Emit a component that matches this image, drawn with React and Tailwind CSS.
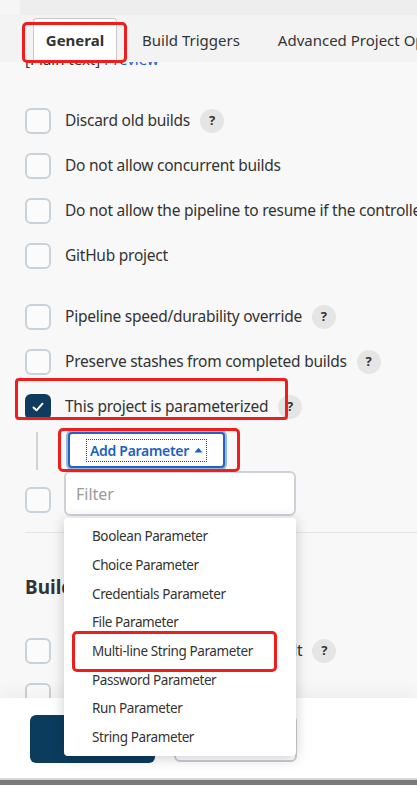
import React from "react";

const Check = ({ checked }) =>
  checked ? (
    <div className="w-[26px] h-[26px] rounded-[6px] bg-[#0f3b5e] flex items-center justify-center shrink-0">
      <svg width="14" height="14" viewBox="0 0 14 14">
        <path d="M2.5 7.5 L5.5 10.3 L11.5 3.7" stroke="white" strokeWidth="2" fill="none" strokeLinecap="round" strokeLinejoin="round" />
      </svg>
    </div>
  ) : (
    <div className="w-[26px] h-[26px] rounded-[6px] border-2 border-[#c9d1d9] bg-[#fbfbfb] shrink-0" />
  );

const Help = () => (
  <span className="ml-[10px] w-[24px] h-[24px] shrink-0 rounded-full bg-[#e5e5e5] text-[#333] text-[13px] font-bold flex items-center justify-center">
    ?
  </span>
);

const Row = ({ label, help, checked, className = "" }) => (
  <div className={"h-[45px] flex items-center pl-[25px] " + className}>
    <Check checked={checked} />
    <span className="ml-[14px] text-[15.5px] text-[#333] whitespace-nowrap tracking-[-0.25px]">{label}</span>
    {help && <Help />}
  </div>
);

const items = [
  "Boolean Parameter",
  "Choice Parameter",
  "Credentials Parameter",
  "File Parameter",
  "Multi-line String Parameter",
  "Password Parameter",
  "Run Parameter",
  "String Parameter",
];

export default function App() {
  return (
    <div className="relative w-[417px] h-[785px] overflow-hidden bg-[#f8f8f8] flex flex-col font-['Noto_Sans',sans-serif]">
      {/* top strip */}
      <div className="h-[15px] flex shrink-0">
        <div className="w-[20px] bg-[#f6f6f6]" />
        <div className="flex-1 bg-[#eeeeee]" />
      </div>
      {/* tab bar */}
      <div className="relative z-10 h-[47px] shrink-0 bg-[#f3f3f3] flex items-end pl-[33px] text-[15px] text-[#333] whitespace-nowrap">
        <div className="shrink-0 w-[84px] h-[44px] bg-white border border-b-0 border-[#c9c9c9] rounded-t-[4px] flex items-center justify-center font-bold">
          General
        </div>
        <div className="shrink-0 h-[44px] flex items-center ml-[25px]">Build Triggers</div>
        <div className="shrink-0 h-[44px] flex items-center ml-[38px]">Advanced Project Options</div>
      </div>

      {/* content */}
      <div className="flex-1 overflow-hidden">
        <div className="h-[7px] overflow-hidden pl-[25px]">
          <div className="-mt-[13px] text-[15px] leading-[20px] whitespace-nowrap">
            <span className="text-[#333]">[Plain text] </span>
            <span className="text-[#1a5fd0]">Preview</span>
          </div>
        </div>
        <div className="mt-[29px]">
          <Row label="Discard old builds" help />
          <Row label="Do not allow concurrent builds" />
          <Row label="Do not allow the pipeline to resume if the controller restarts" />
          <Row label="GitHub project" />
          <Row label="Pipeline speed/durability override" help className="mt-[16px]" />
          <Row label="Preserve stashes from completed builds" help />
          <Row label="This project is parameterized" help checked />
          <div className="mt-[3px] flex items-start">
            <div className="ml-[36px] w-[2px] h-[38px] bg-[#d3d3d3]" />
            <button className="ml-[30px] w-[157px] h-[36px] bg-white border-2 border-[#2262c6] rounded-[4px] shadow-[0_0_0_2px_#9ab8d8] flex items-center justify-center">
              <span className="outline outline-1 outline-dotted outline-[#444] px-[3px] flex items-center gap-[5px] text-[14px] font-semibold text-[#1d5fc2] tracking-[-0.3px]">
                Add Parameter
                <svg width="9" height="6" viewBox="0 0 9 6">
                  <path d="M0.5 5.5 L4.5 0.8 L8.5 5.5 Z" fill="#1d5fc2" />
                </svg>
              </span>
            </button>
          </div>
          <Row label="Throttle builds" help className="mt-[8px] !h-[44px]" />
          <div className="mt-[10px] ml-[25px] border-t border-[#e4e4e4]" />
          <div className="mt-[41px] pl-[25px] text-[19px] font-bold text-[#333] leading-[26px]">Build Triggers</div>
          <Row label="Build after other projects are built" help className="mt-[28px]" />
          <Row label="Build periodically" help />
        </div>
      </div>

      {/* bottom bar */}
      <div className="h-[80px] shrink-0 bg-white shadow-[0_-8px_14px_rgba(0,0,0,0.04)] flex items-start pt-[17px] pl-[30px] gap-[19px]">
        <button className="w-[125px] h-[48px] rounded-[6px] bg-[#0b3c5e] text-white text-[15px] font-semibold">Save</button>
        <button className="w-[123px] h-[47px] rounded-[6px] border-2 border-[#c8ced4] bg-white text-[#333] text-[15px] font-semibold">Apply</button>
      </div>
      <div className="h-[2px] shrink-0 bg-[#d8d8d8]" />
      <div className="h-[5px] shrink-0 bg-[#7a7a7a]" />

      {/* dropdown overlay */}
      <div className="absolute left-[64px] top-[471px] w-[232px] z-20">
        <div className="h-[45px] rounded-[6px] border-2 border-[#ccd2d8] bg-white flex items-center pl-[10px] text-[16px] text-[#9a9a9a]">
          Filter
        </div>
        <div className="mt-[2px] bg-white rounded-[4px] py-[4px] shadow-[0_2px_14px_rgba(0,0,0,0.2)]">
          {items.map((t) => (
            <div key={t} className="h-[28.7px] flex items-center pl-[28px] text-[13.5px] text-[#333] tracking-[-0.4px] whitespace-nowrap">
              {t}
            </div>
          ))}
        </div>
      </div>

      {/* red annotation boxes */}
      <div className="absolute left-[22px] top-[22px] w-[105px] h-[41px] border-[3px] border-[#f01d1a] rounded-[5px] z-30" />
      <div className="absolute left-[15px] top-[378px] w-[273px] h-[42px] border-[3px] border-[#f01d1a] rounded-[4px] z-30" />
      <div className="absolute left-[58px] top-[428px] w-[182px] h-[44px] border-[3px] border-[#f01d1a] rounded-[5px] z-30" />
      <div className="absolute left-[72px] top-[631px] w-[205px] h-[41px] border-[3px] border-[#f01d1a] rounded-[5px] z-30" />
    </div>
  );
}
